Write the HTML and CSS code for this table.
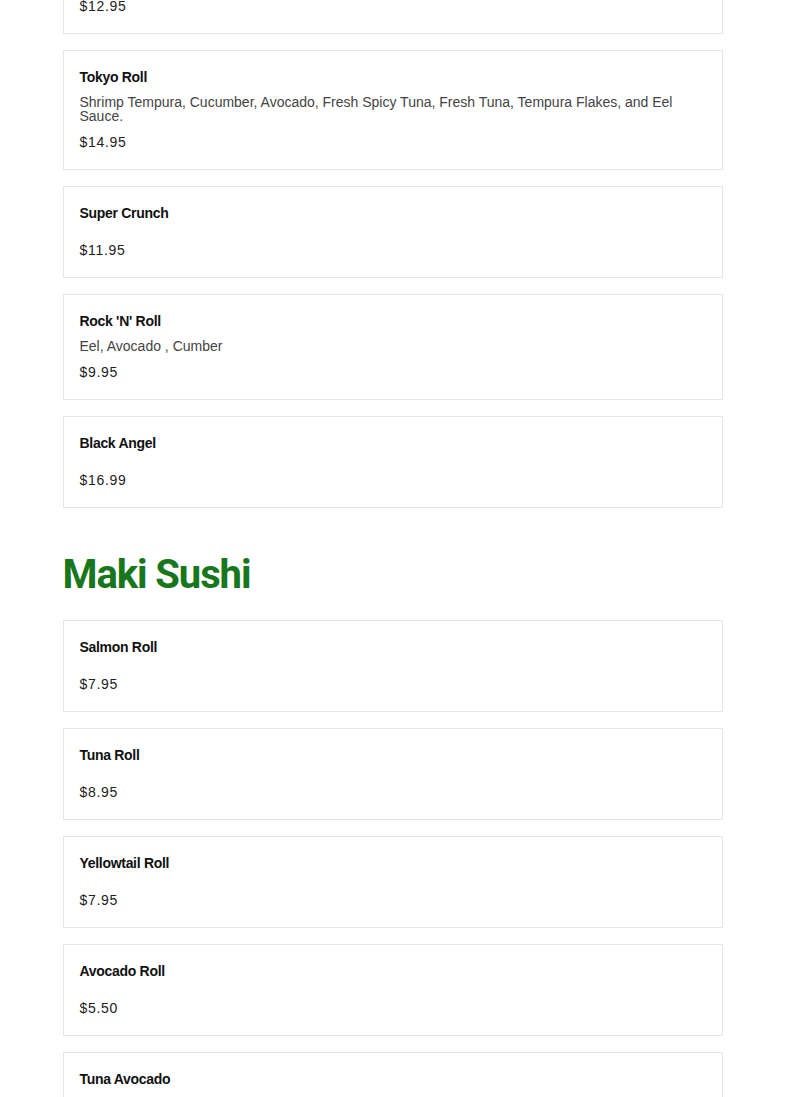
FILE: index.html
```html
<!DOCTYPE html>
<html>
<head>
<meta charset="utf-8">
<link rel="stylesheet" href="styles.css">
</head>
<body>
<main class="menu">
  <section class="group first">
    <div class="item">
      <div class="name">Spider Roll</div>
      <div class="desc"></div>
      <div class="price">$12.95</div>
    </div>
    <div class="item">
      <div class="name">Tokyo Roll</div>
      <div class="desc">Shrimp Tempura, Cucumber, Avocado, Fresh Spicy Tuna, Fresh Tuna, Tempura Flakes, and Eel Sauce.</div>
      <div class="price">$14.95</div>
    </div>
    <div class="item">
      <div class="name">Super Crunch</div>
      <div class="desc"></div>
      <div class="price">$11.95</div>
    </div>
    <div class="item">
      <div class="name">Rock 'N' Roll</div>
      <div class="desc">Eel, Avocado , Cumber</div>
      <div class="price">$9.95</div>
    </div>
    <div class="item">
      <div class="name">Black Angel</div>
      <div class="desc"></div>
      <div class="price">$16.99</div>
    </div>
  </section>
  <section class="group">
    <h2 class="heading">Maki Sushi</h2>
    <div class="item">
      <div class="name">Salmon Roll</div>
      <div class="desc"></div>
      <div class="price">$7.95</div>
    </div>
    <div class="item">
      <div class="name">Tuna Roll</div>
      <div class="desc"></div>
      <div class="price">$8.95</div>
    </div>
    <div class="item">
      <div class="name">Yellowtail Roll</div>
      <div class="desc"></div>
      <div class="price">$7.95</div>
    </div>
    <div class="item">
      <div class="name">Avocado Roll</div>
      <div class="desc"></div>
      <div class="price">$5.50</div>
    </div>
    <div class="item">
      <div class="name">Tuna Avocado</div>
      <div class="desc"></div>
      <div class="price">$9.95</div>
    </div>
  </section>
</main>
</body>
</html>
```
FILE: styles.css
```css
html, body {
  margin: 0;
  padding: 0;
  background: #ffffff;
}
body {
  font-family: "Liberation Sans", Arial, sans-serif;
  color: #111;
  overflow: hidden;
}
.menu {
  width: 660px;
  margin: -58px auto 0;
  display: flex;
  flex-direction: column;
}
.group {
  display: flex;
  flex-direction: column;
  gap: 16px;
}
.heading {
  margin: 43px 0 5px;
  font-family: Roboto, "Liberation Sans", sans-serif;
  font-size: 40px;
  line-height: 48px;
  font-weight: 700;
  color: #18761c;
  letter-spacing: -1.1px;
}
.item {
  border: 1px solid #e6e6e6;
  padding: 16px 16px 17px;
  display: flex;
  flex-direction: column;
}
.name {
  font-size: 14px;
  line-height: 20px;
  font-weight: 700;
  color: #111;
  letter-spacing: -0.3px;
  margin-bottom: 8px;
}
.desc {
  font-size: 14px;
  line-height: 14px;
  color: #444;
  margin-bottom: 9px;
}
.price {
  font-size: 14px;
  line-height: 20px;
  color: #222;
  letter-spacing: 0.7px;
}
```
